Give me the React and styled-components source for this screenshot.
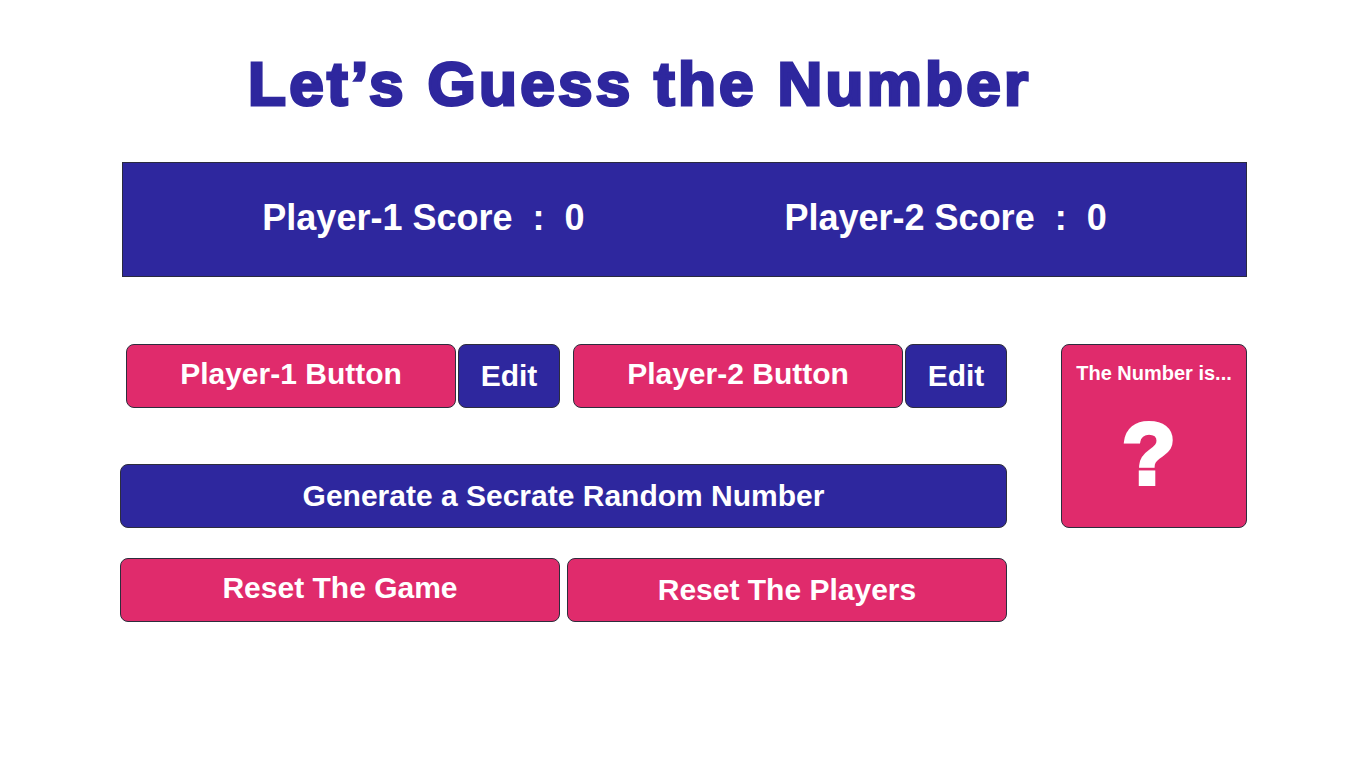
import React from 'react';
import styled, { createGlobalStyle } from 'styled-components';

const BLUE = '#2e279e';
const PINK = '#e02b6c';

const GlobalStyle = createGlobalStyle`
  body {
    margin: 0;
    background: #fff;
    font-family: "Liberation Sans", Arial, sans-serif;
  }
`;

const Page = styled.div`
  width: 1127px;
  margin-left: 120px;
  padding-top: 52px;
`;

const Title = styled.h1`
  margin: 0 0 47px 128px;
  font-size: 62px;
  line-height: 63px;
  font-weight: 700;
  letter-spacing: 3.3px;
  color: ${BLUE};
  -webkit-text-stroke: 3px ${BLUE};
`;

const ScoreBar = styled.div`
  margin-left: 2px;
  height: 113px;
  background: ${BLUE};
  border: 1px solid #2a2a40;
  display: flex;
  align-items: center;
  justify-content: center;
  gap: 200px;
`;

const Score = styled.div`
  color: #fff;
  font-size: 36px;
  font-weight: 700;
  white-space: pre;
  margin-bottom: 3px;
`;

const Board = styled.div`
  margin-top: 67px;
  display: flex;
  gap: 54px;
  align-items: flex-start;
`;

const Controls = styled.div`
  width: 887px;
  display: flex;
  flex-direction: column;
`;

const PlayerRow = styled.div`
  display: flex;
  gap: 13px;
  padding-left: 6px;
`;

const PlayerGroup = styled.div`
  display: flex;
  gap: 2px;
`;

const Btn = styled.button`
  box-sizing: border-box;
  width: ${(p) => p.$w || '100%'};
  height: 64px;
  border: 1px solid #2d2d3d;
  border-radius: 8px;
  background: ${(p) => (p.$blue ? BLUE : PINK)};
  color: #fff;
  font-family: "Liberation Sans", Arial, sans-serif;
  font-size: 30px;
  font-weight: 700;
  padding: 0 0 ${(p) => p.$lift || 0}px;
  display: flex;
  align-items: center;
  justify-content: center;
  cursor: pointer;
`;

const GenRow = styled.div`
  margin-top: 56px;
`;

const ResetRow = styled.div`
  margin-top: 30px;
  display: flex;
  gap: 7px;
`;

const NumberCard = styled.div`
  box-sizing: border-box;
  width: 186px;
  height: 184px;
  border: 1px solid #2d2d3d;
  border-radius: 8px;
  background: ${PINK};
  color: #fff;
  display: flex;
  flex-direction: column;
  align-items: center;
  padding-top: 17px;
`;

const CardLabel = styled.div`
  font-size: 20px;
  font-weight: 700;
  line-height: 23px;
`;

const Mark = styled.div`
  margin-top: 25px;
  margin-right: 10px;
  font-size: 88px;
  font-weight: 700;
  line-height: 88px;
  -webkit-text-stroke: 4px #fff;
`;

const App = () => {
  return (
    <>
      <GlobalStyle />
      <Page>
        <Title>Let’s Guess the Number</Title>
        <ScoreBar>
          <Score>Player-1 Score  :  0</Score>
          <Score>Player-2 Score  :  0</Score>
        </ScoreBar>
        <Board>
          <Controls>
            <PlayerRow>
              <PlayerGroup>
                <Btn $w="330px" $lift={5}>Player-1 Button</Btn>
                <Btn $w="102px" $blue>Edit</Btn>
              </PlayerGroup>
              <PlayerGroup>
                <Btn $w="330px" $lift={5}>Player-2 Button</Btn>
                <Btn $w="102px" $blue>Edit</Btn>
              </PlayerGroup>
            </PlayerRow>
            <GenRow>
              <Btn $blue>Generate a Secrate Random Number</Btn>
            </GenRow>
            <ResetRow>
              <Btn $w="440px" $lift={4}>Reset The Game</Btn>
              <Btn $w="440px">Reset The Players</Btn>
            </ResetRow>
          </Controls>
          <NumberCard>
            <CardLabel>The Number is...</CardLabel>
            <Mark>?</Mark>
          </NumberCard>
        </Board>
      </Page>
    </>
  );
};

export default App;
